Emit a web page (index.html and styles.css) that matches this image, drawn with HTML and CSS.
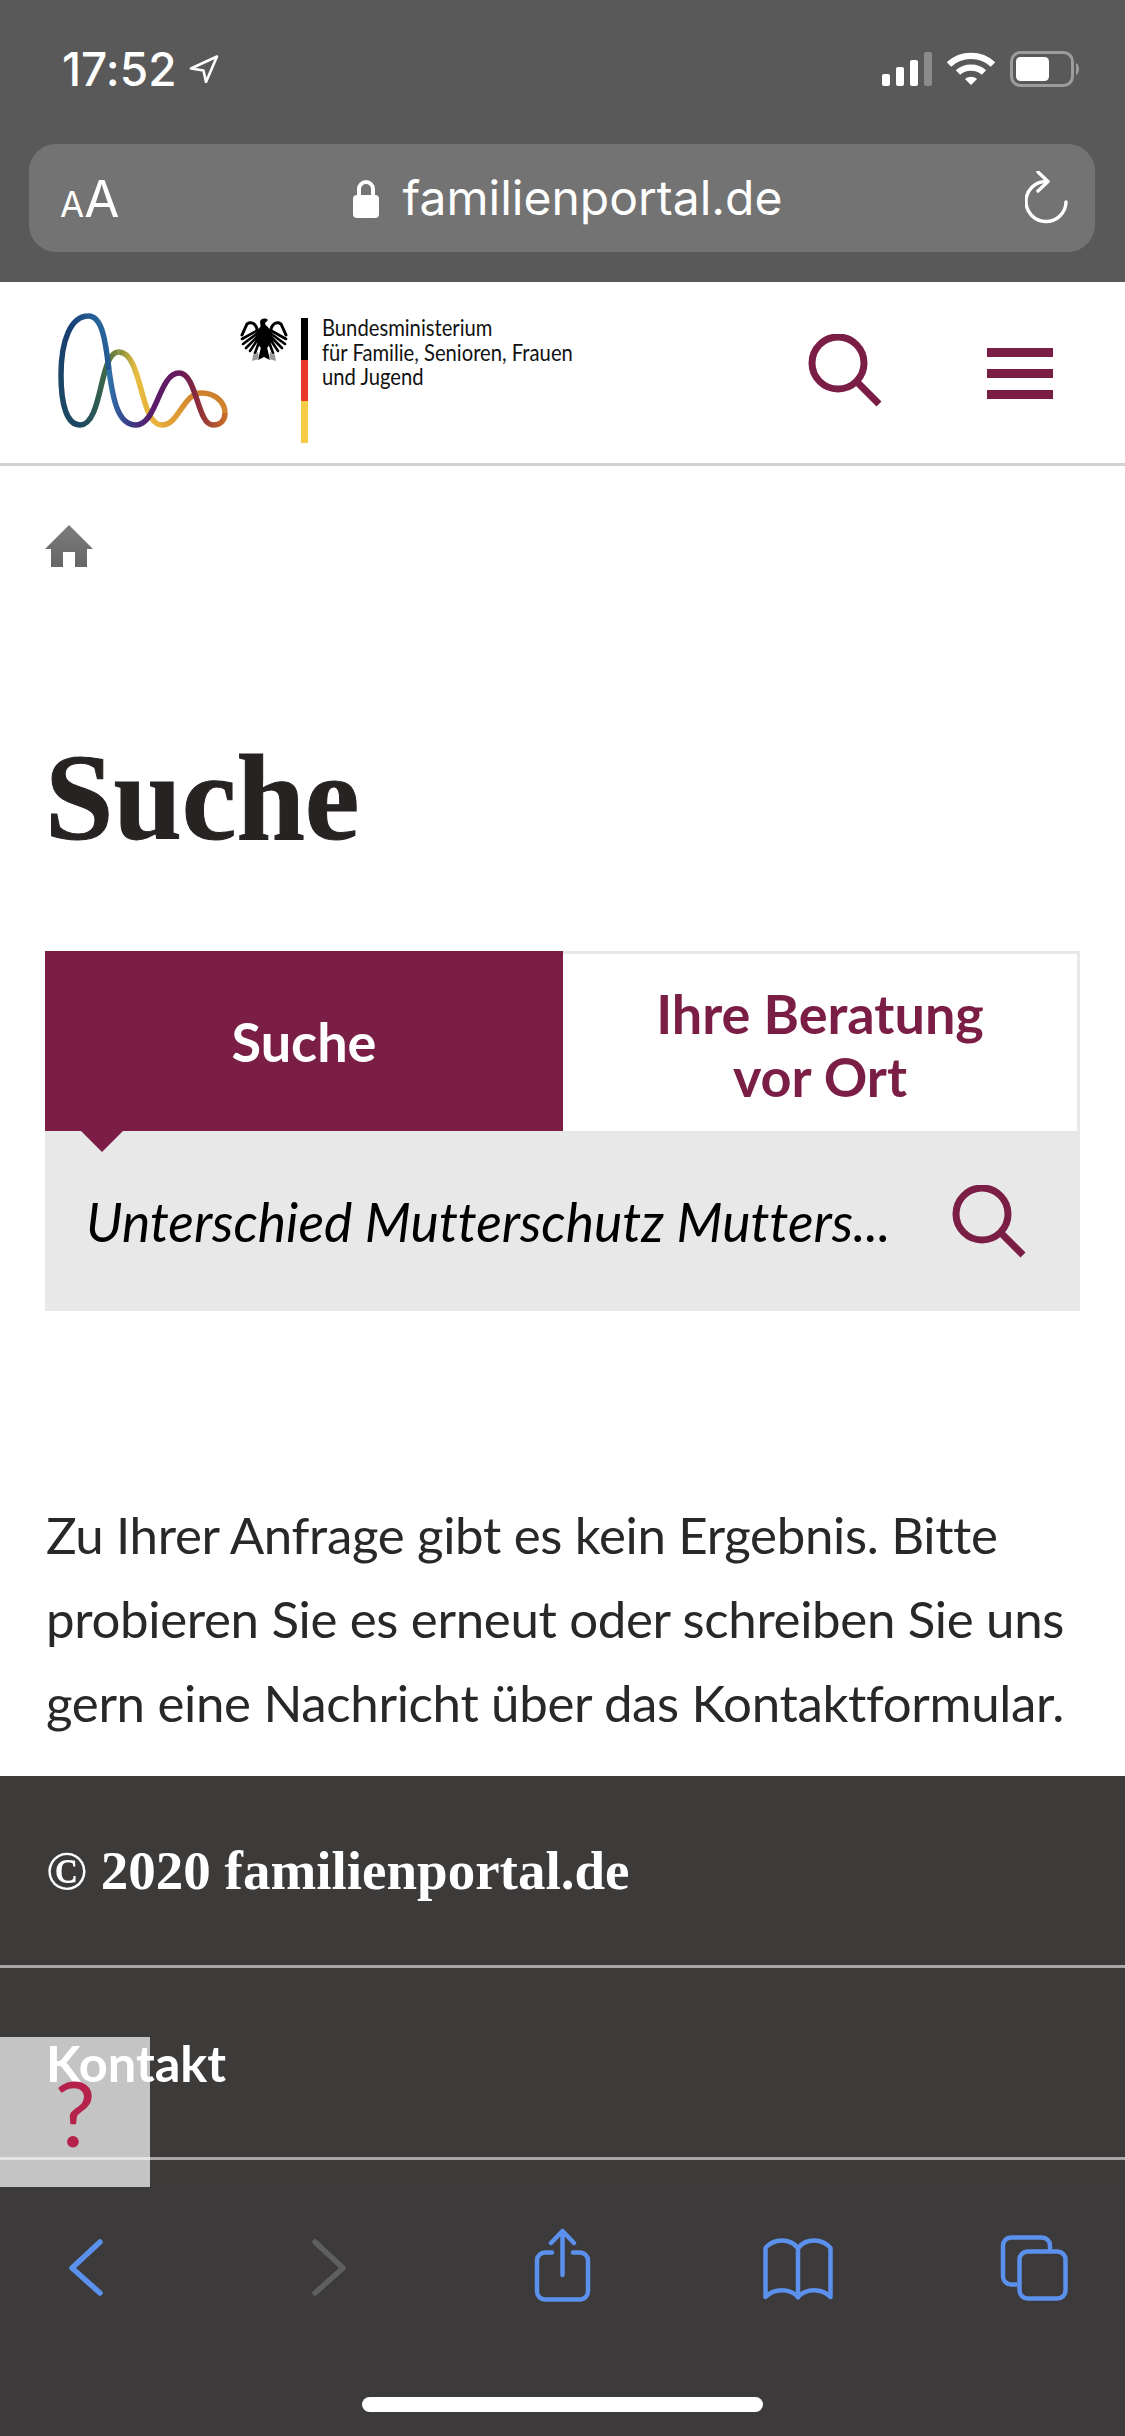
FILE: index.html
```html
<!DOCTYPE html>
<html lang="de">
<head>
<meta charset="utf-8">
<title>Suche – familienportal.de</title>
<link rel="stylesheet" href="styles.css">
</head>
<body>
<div class="screen">
  <header class="chrome">
    <div class="status">
      <div class="status-left">
        <span class="time">17:52</span>
        <svg width="30" height="28" viewBox="0 0 30 28"><path d="M28 1.500 2 13.500 14.500 15.500 17 27Z" fill="none" stroke="#fff" stroke-width="2.600" stroke-linejoin="round"/></svg>
      </div>
      <div class="status-right">
        <svg width="50" height="34" viewBox="0 0 50 34"><rect x="0" y="22" width="8" height="12" rx="2" fill="#fff"/><rect x="14" y="15" width="8" height="19" rx="2" fill="#fff"/><rect x="28" y="8" width="8" height="26" rx="2" fill="#fff"/><rect x="42" y="0" width="8" height="34" rx="2" fill="#8a8a8a"/></svg>
        <svg width="48" height="34" viewBox="0 0 48 34"><path d="M2 12.500C14 1 34 1 46 12.500" fill="none" stroke="#fff" stroke-width="6.400"/><path d="M11 20.500C18 14 30 14 37 20.500" fill="none" stroke="#fff" stroke-width="6.400"/><path d="M18 27 24 33 30 27C26.500 24 21.500 24 18 27Z" fill="#fff"/></svg>
        <svg width="72" height="36" viewBox="0 0 72 36"><rect x="1.500" y="1.500" width="61" height="33" rx="9" fill="none" stroke="#9c9c9c" stroke-width="3"/><rect x="6" y="6" width="33" height="24" rx="4.500" fill="#fff"/><path d="M66 12C70 13 70 23 66 24Z" fill="#9c9c9c"/></svg>
      </div>
    </div>
    <div class="urlbar">
      <span class="aa"><span class="aa-small">A</span>A</span>
      <div class="url">
        <svg width="26" height="39" viewBox="0 0 26 39"><path d="M6 19V10a7 7 0 0 1 14 0v9" fill="none" stroke="#fff" stroke-width="4"/><rect x="0" y="16" width="26" height="23" rx="4" fill="#fff"/></svg>
        <span>familienportal.de</span>
      </div>
      <svg width="46" height="54" viewBox="0 0 46 54"><path d="M21 10.500A20 20 0 1 0 41 31" fill="none" stroke="#fff" stroke-width="3.400" stroke-linecap="round"/><path d="M13 1 23 10.500 13 20" fill="none" stroke="#fff" stroke-width="3.400" stroke-linecap="round" stroke-linejoin="round"/></svg>
    </div>
  </header>

  <main class="page">
    <div class="sitebar">
      <svg class="wave" width="175" height="122" viewBox="0 0 175 122">
        <defs>
          <linearGradient id="g1" x1="0" y1="1" x2="1" y2="0"><stop offset="0" stop-color="#1d4a5f"/><stop offset=".55" stop-color="#173f74"/><stop offset="1" stop-color="#2f72aa"/></linearGradient>
          <linearGradient id="g2" x1="0" y1="0" x2="1" y2="0"><stop offset="0" stop-color="#2f72aa"/><stop offset=".3" stop-color="#3a3a86"/><stop offset=".6" stop-color="#5a1c6c"/><stop offset="1" stop-color="#651a5c"/></linearGradient>
          <linearGradient id="g3" x1="0" y1="0" x2="1" y2="0"><stop offset="0" stop-color="#651a5c"/><stop offset=".4" stop-color="#8a2a3c"/><stop offset="1" stop-color="#c76d2a"/></linearGradient>
          <linearGradient id="g4" x1="1" y1="0" x2="0" y2="1"><stop offset="0" stop-color="#c97a2c"/><stop offset="1" stop-color="#e6a636"/></linearGradient>
          <linearGradient id="g6" x1="0" y1="0" x2="1" y2="0"><stop offset="0" stop-color="#7f8a3c"/><stop offset=".4" stop-color="#e6bc40"/><stop offset="1" stop-color="#e9ae38"/></linearGradient>
          <linearGradient id="g7" x1="0" y1="1" x2="1" y2="0"><stop offset="0" stop-color="#1d4a5f"/><stop offset=".7" stop-color="#3f6a48"/><stop offset="1" stop-color="#7f8a3c"/></linearGradient>
        </defs>
        <g fill="none" stroke-width="5.500">
          <path d="M107 115C84 115 88 42 63.600 42" stroke="url(#g6)"/>
          <path d="M63.600 42C44 42 48 115 25 115" stroke="url(#g7)"/>
          <path d="M170 103C170 92 160 83 146.600 83C128 83 124 115 107 115" stroke="url(#g4)"/>
          <path d="M25 115C12 115 6 95 6 65C6 30 16 6 33.500 6C48 6 51 35 54 60" stroke="url(#g1)"/>
          <path d="M54 60C58 90 63 115 81 115C102 115 104 63 124 63" stroke="url(#g2)"/>
          <path d="M124 63C142 63 142 115 158 115C166 115 170 110 170 103" stroke="url(#g3)"/>
        </g>
      </svg>
      <svg class="eagle" width="48" height="46" viewBox="0 0 48 46">
        <g fill="none" stroke="#000" stroke-linecap="round">
          <path d="M17 12C15 5 10 5 7 7L2 18" stroke-width="3"/>
          <path d="M31 12C33 5 38 5 41 7L46 18" stroke-width="3"/>
          <path d="M18 13 2 22M18 16 3 27M18 19 6 31M18 22 10 34M19 25 15 36M30 13 46 22M30 16 45 27M30 19 42 31M30 22 38 34M29 25 33 36" stroke-width="2.600"/>
        </g>
        <ellipse cx="24" cy="20" rx="7" ry="12" fill="#000"/>
        <path d="M20 5C20 2 25 0 28 3L25 6 27 12H21Z" fill="#000"/>
        <path d="M21 30H27L30 43 24 40 18 43Z" fill="#000"/>
        <path d="M13 38 18 35 19 42 12 44ZM35 38 30 35 29 42 36 44Z" fill="#9a9a9a"/>
      </svg>
      <div class="flag"><span class="flag-black"></span><span class="flag-red"></span><span class="flag-gold"></span></div>
      <p class="ministry">Bundesministerium<br>für Familie, Senioren, Frauen<br>und Jugend</p>
      <svg class="site-search" width="74" height="73" viewBox="0 0 74 73"><circle cx="30" cy="29" r="26" fill="none" stroke="#7b1e46" stroke-width="7"/><path d="M48 47 71 70" stroke="#7b1e46" stroke-width="7"/></svg>
      <div class="menu"><span></span><span></span><span></span></div>
    </div>

    <nav class="crumbs">
      <svg width="48" height="42" viewBox="0 0 48 42"><defs><linearGradient id="h" x1="0" y1="0" x2="0" y2="1"><stop offset="0" stop-color="#7c7c7c"/><stop offset="1" stop-color="#666"/></linearGradient></defs><path d="M24 0 48 24H42V42H30V27H18V42H6V24H0Z" fill="url(#h)"/></svg>
    </nav>

    <h1 class="title">Suche</h1>

    <section class="finder">
      <div class="tabs">
        <div class="tab tab-active">Suche</div>
        <div class="tab tab-idle">Ihre Beratung<br>vor Ort</div>
      </div>
      <div class="query">
        <span class="query-text">Unterschied Mutterschutz Mutters...</span>
        <svg width="74" height="73" viewBox="0 0 74 73"><circle cx="30" cy="29" r="26" fill="none" stroke="#7b1e46" stroke-width="7"/><path d="M48 47 71 70" stroke="#7b1e46" stroke-width="7"/></svg>
      </div>
    </section>

    <p class="message">Zu Ihrer Anfrage gibt es kein Ergebnis. Bitte<br>probieren Sie es erneut oder schreiben Sie uns<br>gern eine Nachricht über das Kontaktformular.</p>

    <footer class="foot">
      <div class="foot-row foot-copy">© 2020 familienportal.de</div>
      <div class="foot-row foot-link">Kontakt</div>
    </footer>

    <div class="help">?</div>
  </main>

  <nav class="toolbar">
    <div class="tools">
      <svg width="100" height="80" viewBox="0 0 100 80"><path d="M64 14 36 40 64 65" fill="none" stroke="#5b91ec" stroke-width="5.500" stroke-linecap="round" stroke-linejoin="round"/></svg>
      <svg width="100" height="80" viewBox="0 0 100 80"><path d="M42 14 70 40 42 65" fill="none" stroke="#5f5f5f" stroke-width="5.500" stroke-linecap="round" stroke-linejoin="round"/></svg>
      <svg width="100" height="80" viewBox="0 0 100 80"><g fill="none" stroke="#5b91ec" stroke-width="4.500" stroke-linecap="round" stroke-linejoin="round"><path d="M42 24.500H35a8 8 0 0 0-8 8V63.500a8 8 0 0 0 8 8H70a8 8 0 0 0 8-8V32.500a8 8 0 0 0-8-8H63"/><path d="M52.500 47V3M41 15 52.500 3 64 15"/></g></svg>
      <svg width="100" height="80" viewBox="0 0 100 80"><g fill="none" stroke="#5b91ec" stroke-width="4.500" stroke-linecap="round" stroke-linejoin="round"><path d="M51 20C43 10 27 10 18.500 20V69C27 60 43 60 51 69"/><path d="M51 20C59 10 75 10 83.500 20V69C75 60 59 60 51 69"/><path d="M51 20V69"/></g></svg>
      <svg width="100" height="80" viewBox="0 0 100 80"><g fill="none" stroke="#5b91ec" stroke-width="4.500" stroke-linejoin="round"><path d="M33 56.500H27a8 8 0 0 1-8-8V17.500a8 8 0 0 1 8-8H58a8 8 0 0 1 8 8V22"/><rect x="35.500" y="23.500" width="46" height="47" rx="8"/></g></svg>
    </div>
    <div class="home-bar"></div>
  </nav>
</div>
</body>
</html>
```

FILE: styles.css
```css
* { box-sizing: border-box; }
html, body { margin: 0; padding: 0; }
body { font-family: "Lato", "Noto Sans", sans-serif; font-variant-ligatures: none; background: #fff; }
.screen { width: 1125px; height: 2436px; display: flex; flex-direction: column; overflow: hidden; }

/* browser chrome */
.chrome { background: #595959; height: 282px; color: #fff; flex: none; }
.status { height: 138px; padding: 0 43px 0 62px; display: flex; justify-content: space-between; align-items: center; }
.status-left { display: flex; align-items: center; gap: 12px; }
.time { font-family: "Inter", sans-serif; font-weight: 500; font-size: 46px; line-height: 44px; }
.status-right { display: flex; align-items: center; gap: 15px; }
.urlbar { margin: 6px 30px 0 29px; height: 108px; background: #737373; border-radius: 27px; padding: 0 24px 0 31px; display: flex; align-items: center; justify-content: space-between; }
.aa { font-family: "Inter", sans-serif; font-size: 51px; width: 57px; line-height: 1; }
.aa-small { font-size: 35px; }
.url { display: flex; align-items: center; gap: 24px; margin-right: 7px; font-family: "Inter", sans-serif; font-size: 48px; line-height: 60px; }

/* page */
.page { position: relative; flex: 1; min-height: 0; overflow: hidden; background: #fff; display: flex; flex-direction: column; }
.sitebar { height: 184px; flex: none; border-bottom: 3px solid #d2d2d2; padding: 0 72px 0 55px; display: flex; align-items: flex-start; }
.wave { margin-top: 28px; flex: none; }
.eagle { margin: 35px 0 0 10px; flex: none; }
.flag { margin: 36px 0 0 13px; width: 7px; height: 125px; display: flex; flex-direction: column; flex: none; }
.flag span { flex: 1; }
.flag-black { background: #000; }
.flag-red { background: #e8392a; }
.flag-gold { background: #f6cc47; }
.ministry { margin: 33px 0 0 14px; width: 298px; margin-right: -47px; font-size: 24px; line-height: 24.500px; color: #111; white-space: nowrap; flex: none; transform: scaleX(.842); transform-origin: left top; }
.site-search { margin: 52px 0 0 auto; flex: none; }
.menu { margin: 66px 0 0 105px; width: 66px; display: flex; flex-direction: column; gap: 12px; flex: none; }
.menu span { display: block; height: 9px; background: #7b1e46; }

.crumbs { flex: none; padding: 59px 0 0 45px; height: 101px; }
.crumbs svg { display: block; }
.title { margin: 0; flex: none; padding-left: 45px; height: 384px; padding-top: 166px; font-family: "Liberation Serif", serif; font-weight: 700; -webkit-text-stroke: 1px #262322; font-size: 123px; line-height: 130px; color: #262322; }

.finder { margin: 0 45px; flex: none; }
.tabs { display: flex; height: 180px; }
.tab { display: flex; align-items: center; justify-content: center; text-align: center; font-weight: 700; font-size: 54px; line-height: 63px; }
.tab-active { position: relative; width: 518px; background: #7b1e46; color: #fff; }
.tab-active::after { content: ""; position: absolute; left: 36px; top: 100%; border-style: solid; border-width: 21px 21px 0; border-color: #7b1e46 transparent transparent; z-index: 1; }
.tab-idle { flex: 1; padding-top: 5px; background: #fff; color: #7b1e46; border-top: 3px solid #e8e8e8; border-right: 3px solid #e8e8e8; }
.query { height: 180px; background: #e8e8e8; padding: 0 54px 0 41px; display: flex; align-items: center; justify-content: space-between; }
.query-text { font-style: italic; font-size: 53.500px; color: #000; white-space: nowrap; }

.message { margin: 0; flex: none; padding: 182px 0 0 46px; height: 465px; font-size: 51px; letter-spacing: -.33px; line-height: 84px; color: #2a2727; white-space: nowrap; }

.foot { flex: 1; background: #3d3a3a; color: #fff; }
.foot-row { height: 192px; border-bottom: 3px solid #a8a6a6; padding-left: 46px; display: flex; align-items: center; }
.foot-copy { font-family: "Liberation Serif", serif; font-weight: 700; font-size: 55px; }
.foot-link { font-weight: 700; font-size: 50.500px; }
.help { position: absolute; left: 0; bottom: 0; width: 150px; height: 150px; background: rgba(255,255,255,.7); color: #b5224c; font-size: 92px; line-height: 1; display: flex; align-items: center; justify-content: center; }

/* toolbar */
.toolbar { flex: none; height: 249px; background: #3c3a3b; padding-top: 41px; }
.tools { display: flex; gap: 137px; padding-left: 36px; }
.tools svg { display: block; flex: none; }
.home-bar { width: 401px; height: 15px; margin: 89px auto 0; border-radius: 8px; background: #fff; }
```
